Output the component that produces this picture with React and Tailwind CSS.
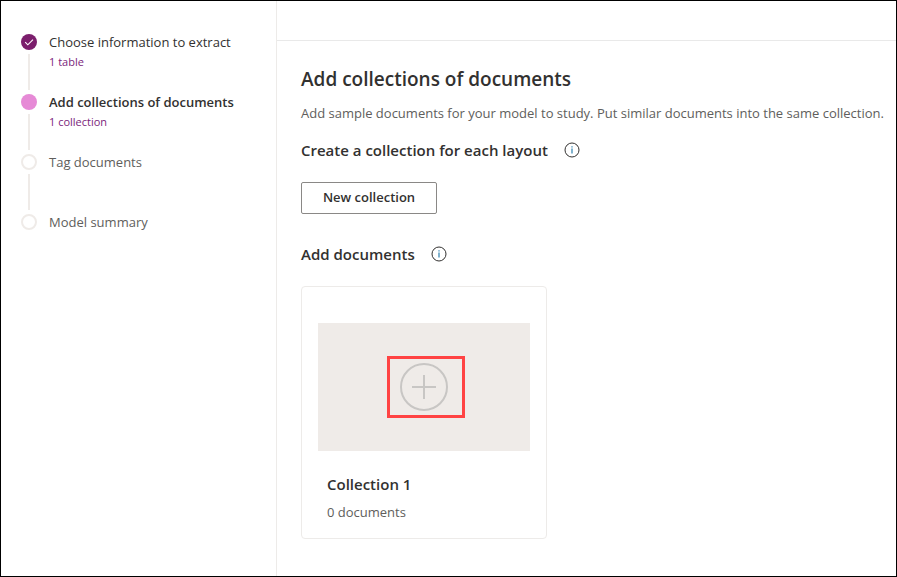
const steps = [
  { label: "Choose information to extract", note: "1 table", state: "done" },
  { label: "Add collections of documents", note: "1 collection", state: "current" },
  { label: "Tag documents", state: "todo" },
  { label: "Model summary", state: "todo" },
];

const labelStyles = {
  done: "text-[#323130]",
  current: "font-semibold text-[#323130]",
  todo: "text-[#605e5c]",
};

function StepMarker({ state }) {
  if (state === "done") {
    return (
      <span className="size-4 rounded-full bg-[#7b1e6c]">
        <svg viewBox="0 0 16 16" className="size-4" fill="none" stroke="#fff" strokeWidth="1.1" aria-hidden="true">
          <path d="M4.2 8.2 6.8 10.8 12 5.6" />
        </svg>
      </span>
    );
  }
  if (state === "current") {
    return <span className="size-4 rounded-full bg-[#e68ad6]" />;
  }
  return <span className="size-4 rounded-full border-2 border-[#efebe8]" />;
}

function Step({ label, note, state, last }) {
  return (
    <li className="flex h-15 gap-3" aria-current={state === "current" ? "step" : undefined}>
      <div className="flex flex-col items-center gap-1 pt-1">
        <StepMarker state={state} />
        {!last && <span className="h-9 w-0.5 bg-[#efebe8]" />}
      </div>
      <div className="whitespace-nowrap">
        <p className={`text-[13px] leading-6 ${labelStyles[state]}`}>{label}</p>
        {note && <p className="text-[11px] leading-4 text-[#7b1e7b]">{note}</p>}
      </div>
    </li>
  );
}

function InfoButton({ label }) {
  return (
    <button type="button" aria-label={label} className="size-4">
      <svg viewBox="0 0 16 16" className="size-4" fill="none" aria-hidden="true">
        <circle cx="8" cy="8" r="7" stroke="#323130" strokeWidth="1" />
        <path d="M8 6.5V11.5" stroke="#2b7fae" strokeWidth="1.2" />
        <path d="M8 4.2V5.4" stroke="#2b7fae" strokeWidth="1.2" />
      </svg>
    </button>
  );
}

function SectionHeading({ children, info }) {
  return (
    <div className="flex items-center gap-4">
      <h2 className="text-[15px] leading-6 font-semibold">{children}</h2>
      <InfoButton label={info} />
    </div>
  );
}

function CollectionCard({ name, count }) {
  return (
    <article className="mt-5 w-[246px] rounded border border-[#edebe9] px-4 pt-9 pb-3">
      <div className="grid h-32 place-items-center bg-[#efebe8]">
        <div className="relative size-12">
          <button type="button" aria-label={`Add documents to ${name}`} className="block size-12">
            <svg viewBox="0 0 48 48" className="size-12" fill="none" stroke="#c8c6c4" strokeWidth="2" aria-hidden="true">
              <circle cx="24" cy="24" r="23" />
              <path d="M12 24H36M24 12V36" />
            </svg>
          </button>
          <span className="pointer-events-none absolute -top-[7px] -left-[13px] h-[62px] w-[78px] border-3 border-[#ff4343]" />
        </div>
      </div>
      <div className="px-[9px] pt-[19px]">
        <h3 className="text-[15px] leading-7 font-semibold">{name}</h3>
        <p className="text-[13px] leading-7 text-[#605e5c]">{count} documents</p>
      </div>
    </article>
  );
}

export default function App() {
  return (
    <div className="flex min-h-screen overflow-hidden border border-black bg-white font-['Segoe_UI','Open_Sans',sans-serif] text-[#323130]">
      <nav aria-label="Progress" className="w-[276px] shrink-0 border-r border-[#edebe9] px-5 pt-[29px]">
        <ol>
          {steps.map((step, i) => (
            <Step key={step.label} {...step} last={i === steps.length - 1} />
          ))}
        </ol>
      </nav>
      <div className="min-w-0 flex-1">
        <header className="h-10 border-b border-[#e9e9e9]" />
        <main className="pt-6 pl-6">
          <h1 className="text-[19px] leading-7 font-semibold">Add collections of documents</h1>
          <p className="mt-2 text-[13px] leading-6 whitespace-nowrap text-[#605e5c]">
            Add sample documents for your model to study. Put similar documents into the same collection.
          </p>
          <div className="mt-[13px]">
            <SectionHeading info="About collections">Create a collection for each layout</SectionHeading>
          </div>
          <button
            type="button"
            className="mt-5 h-8 w-34 rounded-xs border border-[#8a8886] text-[13px] font-semibold"
          >
            New collection
          </button>
          <div className="mt-7">
            <SectionHeading info="About adding documents">Add documents</SectionHeading>
          </div>
          <CollectionCard name="Collection 1" count={0} />
        </main>
      </div>
    </div>
  );
}
